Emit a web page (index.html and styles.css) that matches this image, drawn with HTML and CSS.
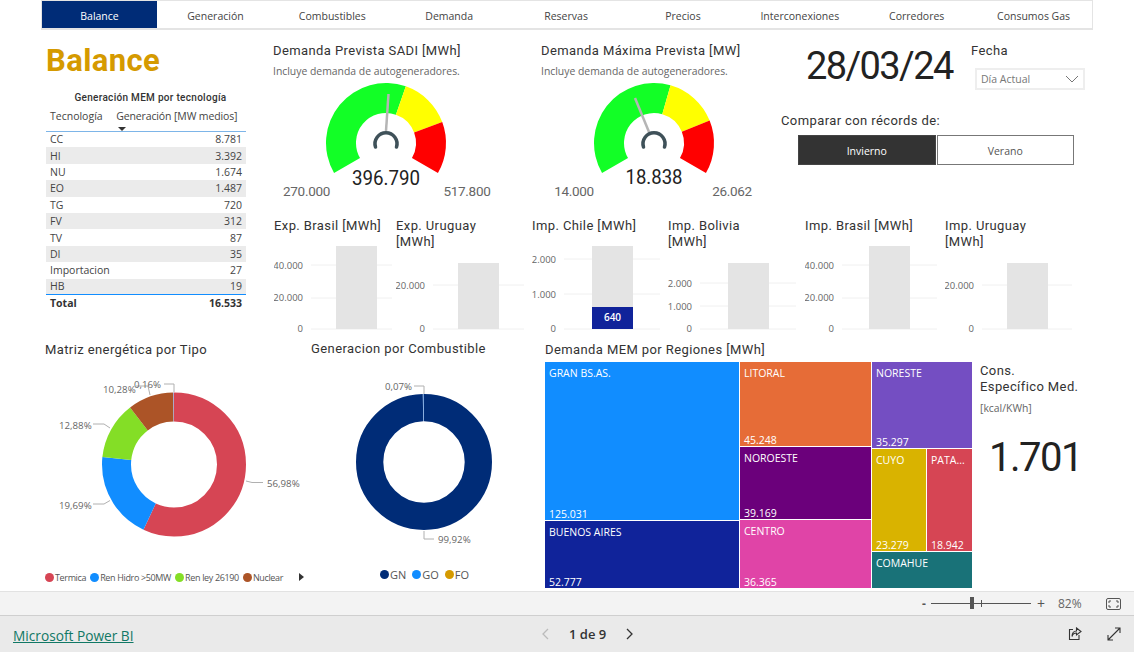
FILE: index.html

```html
<!DOCTYPE html>
<html lang="es">
<head>
  <meta charset="utf-8"/>
  <title>Balance</title>
  <link rel="stylesheet" href="styles.css">
</head>
<body>
<main class="report">
  <!-- tabs -->
  <nav class="tabs">
    <a class="tab active">Balance</a>
    <a class="tab">Generación</a>
    <a class="tab">Combustibles</a>
    <a class="tab">Demanda</a>
    <a class="tab">Reservas</a>
    <a class="tab">Precios</a>
    <a class="tab">Interconexiones</a>
    <a class="tab">Corredores</a>
    <a class="tab">Consumos Gas</a>
  </nav>

  <section class="upper">
    <div class="side">
      <h1 class="page-title">Balance</h1>
      <h2 class="table-title">Generación MEM por tecnología</h2>
      <table class="tech">
        <thead>
          <tr><th>Tecnología</th><th class="sorted">Generación [MW medios]</th></tr>
        </thead>
        <tbody>
          <tr><td>CC</td><td>8.781</td></tr>
          <tr><td>HI</td><td>3.392</td></tr>
          <tr><td>NU</td><td>1.674</td></tr>
          <tr><td>EO</td><td>1.487</td></tr>
          <tr><td>TG</td><td>720</td></tr>
          <tr><td>FV</td><td>312</td></tr>
          <tr><td>TV</td><td>87</td></tr>
          <tr><td>DI</td><td>35</td></tr>
          <tr><td>Importacion</td><td>27</td></tr>
          <tr><td>HB</td><td>19</td></tr>
        </tbody>
        <tfoot>
          <tr><td>Total</td><td>16.533</td></tr>
        </tfoot>
      </table>
    </div>

    <div class="centre">
      <div class="top-row">
        <div class="gauge">
          <h3 class="din-title">Demanda Prevista SADI [MWh]</h3>
          <p class="note">Incluye demanda de autogeneradores.</p>
          <svg class="dial" width="230" height="128" viewBox="-113 -65 230 128">
            <path fill="#12ff26" d="M-51.96 30A60 60 0 0 1 19.83 -56.63L9.92 -28.31A30 30 0 0 0 -25.98 15Z"/>
            <path fill="#ffff00" d="M19.83 -56.63A60 60 0 0 1 56.24 -20.91L28.12 -10.46A30 30 0 0 0 9.92 -28.31Z"/>
            <path fill="#ff0000" d="M56.24 -20.91A60 60 0 0 1 51.96 30L25.98 15A30 30 0 0 0 28.12 -10.46Z"/>
            <line class="needle" x1="2.5" y1="-49" x2="0" y2="-12"/>
            <path class="hub" d="M-10.5 4A11 11 0 1 1 10.5 4"/>
            <text class="dial-value" x="0" y="42" textLength="68" lengthAdjust="spacingAndGlyphs">396.790</text>
            <text class="dial-limit" x="-79.5" y="53">270.000</text>
            <text class="dial-limit" x="81" y="53">517.800</text>
          </svg>
        </div>
        <div class="gauge">
          <h3 class="din-title">Demanda Máxima Prevista [MW]</h3>
          <p class="note">Incluye demanda de autogeneradores.</p>
          <svg class="dial" width="230" height="128" viewBox="-113 -65 230 128">
            <path fill="#12ff26" d="M-51.96 30A60 60 0 0 1 16.54 -57.68L8.27 -28.84A30 30 0 0 0 -25.98 15Z"/>
            <path fill="#ffff00" d="M16.54 -57.68A60 60 0 0 1 55.63 -22.48L27.82 -11.24A30 30 0 0 0 8.27 -28.84Z"/>
            <path fill="#ff0000" d="M55.63 -22.48A60 60 0 0 1 51.96 30L25.98 15A30 30 0 0 0 27.82 -11.24Z"/>
            <line class="needle" x1="-19" y1="-45" x2="-5" y2="-11"/>
            <path class="hub" d="M-10.5 4A11 11 0 1 1 10.5 4"/>
            <text class="dial-value" x="0" y="41" textLength="57" lengthAdjust="spacingAndGlyphs">18.838</text>
            <text class="dial-limit" x="-80" y="53">14.000</text>
            <text class="dial-limit" x="78" y="53">26.062</text>
          </svg>
        </div>
        <div class="date-box">
          <div class="date-line">
            <div class="date">28/03/24</div>
            <div class="filter">
              <h3 class="din-title">Fecha</h3>
              <div class="select">
                <span>Día Actual</span>
                <svg width="14" height="8" viewBox="0 0 14 8"><path d="M1 1l6 6 6-6" fill="none" stroke="#777" stroke-width="1"/></svg>
              </div>
            </div>
          </div>
          <h3 class="din-title compare">Comparar con récords de:</h3>
          <div class="toggle">
            <button class="on">Invierno</button>
            <button>Verano</button>
          </div>
        </div>
      </div>

      <div class="minis">
        <div class="mini">
          <h3 class="din-title">Exp. Brasil [MWh]</h3>
          <svg width="122" height="89">
            <line class="grid" x1="37" x2="118" y1="19" y2="19"/>
            <line class="grid" x1="37" x2="118" y1="52" y2="52"/>
            <line class="grid" x1="37" x2="118" y1="83" y2="83"/>
            <rect class="bar" x="62" y="0" width="41" height="83"/>
            <text class="tick" x="29" y="23">40.000</text>
            <text class="tick" x="29" y="55">20.000</text>
            <text class="tick" x="29" y="86">0</text>
          </svg>
        </div>
        <div class="mini">
          <h3 class="din-title">Exp. Uruguay<br>[MWh]</h3>
          <svg width="136" height="89">
            <line class="grid" x1="37" x2="128" y1="39" y2="39"/>
            <line class="grid" x1="37" x2="128" y1="83" y2="83"/>
            <rect class="bar" x="62" y="17" width="41" height="66"/>
            <text class="tick" x="29" y="43">20.000</text>
            <text class="tick" x="29" y="86">0</text>
          </svg>
        </div>
        <div class="mini">
          <h3 class="din-title">Imp. Chile [MWh]</h3>
          <svg width="136" height="89">
            <line class="grid" x1="32" x2="128" y1="13" y2="13"/>
            <line class="grid" x1="32" x2="128" y1="48" y2="48"/>
            <line class="grid" x1="32" x2="128" y1="83" y2="83"/>
            <rect class="bar" x="60" y="0" width="41" height="83"/>
            <rect class="bar-value" x="60" y="61" width="41" height="22"/>
            <text class="bar-label" x="80.5" y="75">640</text>
            <text class="tick" x="24" y="17">2.000</text>
            <text class="tick" x="24" y="52">1.000</text>
            <text class="tick" x="24" y="86">0</text>
          </svg>
        </div>
        <div class="mini">
          <h3 class="din-title">Imp. Bolivia<br>[MWh]</h3>
          <svg width="137" height="89">
            <line class="grid" x1="32" x2="128" y1="37" y2="37"/>
            <line class="grid" x1="32" x2="128" y1="60" y2="60"/>
            <line class="grid" x1="32" x2="128" y1="83" y2="83"/>
            <rect class="bar" x="60" y="17" width="41" height="66"/>
            <text class="tick" x="24" y="41">2.000</text>
            <text class="tick" x="24" y="64">1.000</text>
            <text class="tick" x="24" y="86">0</text>
          </svg>
        </div>
        <div class="mini">
          <h3 class="din-title">Imp. Brasil [MWh]</h3>
          <svg width="140" height="89">
            <line class="grid" x1="37" x2="132" y1="19" y2="19"/>
            <line class="grid" x1="37" x2="132" y1="52" y2="52"/>
            <line class="grid" x1="37" x2="132" y1="83" y2="83"/>
            <rect class="bar" x="64" y="0" width="41" height="83"/>
            <text class="tick" x="29" y="23">40.000</text>
            <text class="tick" x="29" y="55">20.000</text>
            <text class="tick" x="29" y="86">0</text>
          </svg>
        </div>
        <div class="mini">
          <h3 class="din-title">Imp. Uruguay<br>[MWh]</h3>
          <svg width="130" height="89">
            <line class="grid" x1="37" x2="127" y1="39" y2="39"/>
            <line class="grid" x1="37" x2="127" y1="83" y2="83"/>
            <rect class="bar" x="62" y="17" width="41" height="66"/>
            <text class="tick" x="29" y="43">20.000</text>
            <text class="tick" x="29" y="86">0</text>
          </svg>
        </div>
      </div>
    </div>
  </section>

  <section class="lower">
    <div class="donut-one">
      <h3 class="din-title">Matriz energética por Tipo</h3>
      <svg width="266" height="208" viewBox="45 360 266 208">
        <g transform="rotate(-90 174 464.5)" fill="none" stroke-width="29">
          <circle cx="174" cy="464.5" r="57.5" pathLength="100" stroke="#d64554" stroke-dasharray="56.98 100"/>
          <circle cx="174" cy="464.5" r="57.5" pathLength="100" stroke="#118dff" stroke-dasharray="19.69 100" stroke-dashoffset="-56.98"/>
          <circle cx="174" cy="464.5" r="57.5" pathLength="100" stroke="#84de26" stroke-dasharray="12.88 100" stroke-dashoffset="-76.67"/>
          <circle cx="174" cy="464.5" r="57.5" pathLength="100" stroke="#ac5427" stroke-dasharray="10.28 100" stroke-dashoffset="-89.55"/>
          <circle cx="174" cy="464.5" r="57.5" pathLength="100" stroke="#8a9fd8" stroke-dasharray="0.17 100" stroke-dashoffset="-99.83"/>
        </g>
        <path class="leader" d="M246 481l6 1.500h11"/>
        <path class="leader" d="M93 504h11l6-3.500"/>
        <path class="leader" d="M93 424h11l6 4"/>
        <path class="leader" d="M136 386h12l2 9"/>
        <path class="leader" d="M164 384h10v8"/>
        <text class="pct" x="267" y="487">56,98%</text>
        <text class="pct" x="59" y="509">19,69%</text>
        <text class="pct" x="59" y="429">12,88%</text>
        <text class="pct" x="103" y="393">10,28%</text>
        <text class="pct" x="134" y="388">0,16%</text>
      </svg>
      <div class="legend small">
        <span class="key"><i class="dot red"></i>Termica</span>
        <span class="key"><i class="dot blue"></i>Ren Hidro &gt;50MW</span>
        <span class="key"><i class="dot green"></i>Ren ley 26190</span>
        <span class="key"><i class="dot brown"></i>Nuclear</span>
        <i class="more"></i>
      </div>
    </div>

    <div class="donut-two">
      <h3 class="din-title">Generacion por Combustible</h3>
      <svg width="234" height="208" viewBox="311 360 234 208">
        <g transform="rotate(-90 424 462)" fill="none" stroke-width="27.300">
          <circle cx="424" cy="462" r="54.350" pathLength="100" stroke="#002c77" stroke-dasharray="99.7 100"/>
          <circle cx="424" cy="462" r="54.350" pathLength="100" stroke="#4d86d0" stroke-dasharray="0.2 100" stroke-dashoffset="-99.8"/>
        </g>
        <path class="leader" d="M414 386h10v8"/>
        <path class="leader" d="M424 531v8h10"/>
        <text class="pct" x="385" y="390">0,07%</text>
        <text class="pct" x="438" y="543">99,92%</text>
      </svg>
      <div class="legend large">
        <span class="key"><i class="dot navy"></i>GN</span>
        <span class="key"><i class="dot blue"></i>GO</span>
        <span class="key"><i class="dot gold"></i>FO</span>
      </div>
    </div>

    <div class="regions">
      <h3 class="din-title">Demanda MEM por Regiones [MWh]</h3>
      <div class="treemap">
        <div class="tree-col first">
          <div class="cell gran"><span>GRAN BS.AS.</span><span>125.031</span></div>
          <div class="cell bsas"><span>BUENOS AIRES</span><span>52.777</span></div>
        </div>
        <div class="tree-col second">
          <div class="cell litoral"><span>LITORAL</span><span>45.248</span></div>
          <div class="cell noroeste"><span>NOROESTE</span><span>39.169</span></div>
          <div class="cell centro"><span>CENTRO</span><span>36.365</span></div>
        </div>
        <div class="tree-col third">
          <div class="cell noreste"><span>NORESTE</span><span>35.297</span></div>
          <div class="tree-pair">
            <div class="cell cuyo"><span>CUYO</span><span>23.279</span></div>
            <div class="cell pata"><span>PATA...</span><span>18.942</span></div>
          </div>
          <div class="cell comahue"><span>COMAHUE</span></div>
        </div>
      </div>
    </div>

    <div class="kpi">
      <h3 class="din-title">Cons.<br>Específico Med.</h3>
      <p class="note">[kcal/KWh]</p>
      <div class="kpi-value">1.701</div>
    </div>
  </section>
</main>

<div class="zoombar">
  <span class="zoom-sign">-</span>
  <div class="slider"><i class="thumb"></i><i class="mark"></i></div>
  <span class="zoom-sign plus">+</span>
  <span class="zoom-pct">82%</span>
  <svg class="fit" width="15" height="12" viewBox="0 0 15 12" fill="none" stroke="#555">
    <rect x="0.500" y="0.500" width="14" height="11" rx="1.500"/>
    <path d="M5 3H3v2M10 3h2v2M5 9H3V7M10 9h2V7"/>
  </svg>
</div>

<footer class="footer">
  <a class="brand">Microsoft Power BI</a>
  <div class="pager">
    <svg width="8" height="12" viewBox="0 0 8 12"><path d="M7 1L2 6l5 5" fill="none" stroke="#bbb" stroke-width="1.300"/></svg>
    <span>1 de 9</span>
    <svg width="8" height="12" viewBox="0 0 8 12"><path d="M1 1l5 5-5 5" fill="none" stroke="#333" stroke-width="1.300"/></svg>
  </div>
  <div class="actions">
    <svg width="14" height="14" viewBox="0 0 14 14" fill="none" stroke="#333" stroke-width="1.100">
      <path d="M5 2.500H1.500v10h9.500V8"/>
      <path d="M8.500 1l4.500 3.500L8.500 8V6C6 6 4.500 7.500 4 9.500c0-3.500 2-5.500 4.500-5.500Z"/>
    </svg>
    <svg width="14" height="14" viewBox="0 0 14 14" fill="none" stroke="#333" stroke-width="1.100">
      <path d="M1 13L13 1M8 1h5v5M1 8v5h5"/>
    </svg>
  </div>
</footer>
</body>
</html>
```

FILE: styles.css

```css
/* page */
* { box-sizing: border-box; }

body {
  margin: 0;
  width: 1134px;
  height: 652px;
  overflow: hidden;
  background: #fff;
  color: #333;
  font-family: "Open Sans", "Noto Sans", sans-serif;
}

h1, h2, h3, p { margin: 0; font-weight: normal; }

svg { display: block; }

.report { height: 591px; }

/* tabs */
.tabs {
  display: flex;
  height: 30px;
  margin-left: 41px;
  width: 1052px;
  border: 1px solid #e4e4e4;
  border-width: 1px 1px 2px 1px;
}

.tab {
  flex: 1;
  padding-top: 3px;
  font-size: 10.500px;
  line-height: 24px;
  text-align: center;
  color: #444;
}

.tab.active { flex: none; width: 115px; background: #002c77; color: #fff; }

/* shared titles */
.din-title {
  font-family: Roboto, sans-serif;
  font-size: 13px;
  line-height: 15.500px;
  letter-spacing: 0.4px;
  color: #333;
}

.note {
  font-size: 10.400px;
  line-height: 14px;
  color: #666;
}

/* upper part */
.upper { display: flex; height: 305px; }

.side { width: 273px; padding-left: 46px; }

.page-title {
  font-family: Roboto, sans-serif;
  font-weight: 700;
  font-size: 31px;
  line-height: 36px;
  height: 38px;
  margin-top: 13px;
  color: #d59a00;
  letter-spacing: 0.4px;
}

.table-title {
  margin-top: 10px;
  width: 209px;
  text-align: center;
  font-family: Roboto, sans-serif;
  font-weight: 500;
  font-size: 10px;
  line-height: 14px;
  letter-spacing: 0.3px;
  color: #333;
}

.tech {
  width: 200px;
  border-collapse: collapse;
  font-size: 10.500px;
  color: #444;
}

.tech th {
  height: 26px;
  font-weight: normal;
  text-align: left;
  padding: 0 4px 4px;
  white-space: nowrap;
  border-bottom: 1px solid #7db5e8;
}

.tech th.sorted { position: relative; padding-left: 0; letter-spacing: -0.12px; }

.tech th.sorted::after {
  content: "";
  position: absolute;
  left: 2px;
  bottom: 0;
  border: 4px solid transparent;
  border-top: 4px solid #333;
  border-bottom: 0;
}

.tech td { height: 16.400px; padding: 0 4px; line-height: 14px; }
.tech td:last-child { text-align: right; }
.tech tbody tr:nth-child(even) td { background: #ebebeb; }
.tech tbody tr:last-child td { border-bottom: 1px solid #118dff; }
.tech tfoot td { font-weight: 700; color: #333; }

.centre { flex: 1; }

.top-row { display: flex; height: 188px; }

.gauge { width: 268px; padding-top: 13px; }
.gauge + .gauge { width: 240px; }
.gauge .note { margin-top: 5px; }

.needle { stroke: #b5b5b5; stroke-width: 2.500; }
.hub { fill: none; stroke: #3f5159; stroke-width: 3.500; stroke-linecap: round; }

.dial-value {
  font-family: Roboto, sans-serif;
  font-size: 20px;
  text-anchor: middle;
  fill: #222;
}

.dial-limit {
  font-family: Roboto, sans-serif;
  font-size: 13.500px;
  letter-spacing: -0.3px;
  text-anchor: middle;
  fill: #666;
}

/* date and records */
.date-box { width: 320px; padding-top: 13px; }

.date-line { display: flex; height: 60px; }

.date {
  width: 190px;
  margin-top: -1px;
  padding-left: 25px;
  font-family: Roboto, sans-serif;
  font-size: 38px;
  line-height: 48px;
  letter-spacing: -1.600px;
  color: #222;
}

.select {
  display: flex;
  align-items: center;
  justify-content: space-between;
  width: 110px;
  height: 22px;
  margin: 9px 0 0 4px;
  padding: 1px 4px 0 4px;
  border: 2px solid #eee;
  font-size: 10.500px;
  color: #777;
}

.compare { margin-top: 10px; }

.toggle { display: flex; gap: 1px; margin: 6px 0 0 17px; }

.toggle button {
  width: 137.500px;
  height: 30px;
  background: #fff;
  border: 1px solid #777;
  font: 10.500px "Open Sans", sans-serif;
  color: #555;
  padding: 2px 0 0;
}

.toggle button.on { background: #333; color: #fff; border-color: #444; }

/* small bar charts */
.minis {
  display: grid;
  grid-template-columns: 122px 136px 136px 137px 140px 130px;
  padding-left: 1px;
}

.mini .din-title { height: 28px; }

.grid { stroke: #f0f0f0; stroke-width: 1; }
.bar { fill: #e4e4e4; }
.bar-value { fill: #10239a; }

.tick {
  font-family: "Open Sans", sans-serif;
  font-size: 9.500px;
  text-anchor: end;
  fill: #666;
}

.bar-label {
  font-family: "Open Sans", sans-serif;
  font-size: 10px;
  font-weight: 600;
  text-anchor: middle;
  fill: #fff;
}

/* lower part */
.lower { display: flex; height: 256px; }

.donut-one { width: 266px; margin-left: 45px; padding-top: 7px; }
.donut-two { width: 234px; padding-top: 6px; }
.donut-one svg { margin-top: 2px; }
.donut-two svg { margin-top: 3px; }

.leader { fill: none; stroke: #b0b0b0; stroke-width: 1; }

.pct {
  font-family: "Open Sans", sans-serif;
  font-size: 9.700px;
  fill: #666;
}

.legend { display: flex; color: #555; white-space: nowrap; }
.legend.small { gap: 4px; font-size: 9px; letter-spacing: -0.35px; align-items: center; margin-top: 3px; }
.legend.large { gap: 6px; font-size: 11px; justify-content: center; padding-right: 7px; margin-top: -1px; }

.key { display: flex; align-items: center; gap: 1px; }

.dot { width: 9px; height: 9px; border-radius: 50%; }
.dot.red { background: #d64554; }
.dot.blue { background: #118dff; }
.dot.green { background: #84de26; }
.dot.brown { background: #ac5427; }
.dot.navy { background: #002c77; }
.dot.gold { background: #d59a00; }

.more {
  margin-left: 12px;
  border-left: 5px solid #333;
  border-top: 4px solid transparent;
  border-bottom: 4px solid transparent;
}

/* treemap */
.regions { width: 427px; padding-top: 7px; }

.treemap { display: flex; gap: 1px; height: 226px; margin-top: 4px; }

.tree-col { display: flex; flex-direction: column; gap: 1px; }
.tree-col.first { width: 194px; }
.tree-col.second { width: 131px; }
.tree-col.third { width: 100px; }

.tree-pair { display: flex; gap: 1px; height: 102px; }

.cell {
  display: flex;
  flex-direction: column;
  justify-content: space-between;
  padding: 5px 4px 0;
  color: #fff;
  font-size: 10.500px;
  line-height: 12px;
}

.gran { height: 158px; background: #118dff; }
.bsas { flex: 1; background: #10239a; }
.litoral { height: 84px; background: #e66c37; }
.noroeste { height: 72px; background: #6b007b; }
.centro { flex: 1; background: #e044a7; }
.noreste { height: 86px; background: #744ec2; }
.cuyo { width: 54px; background: #d9b300; }
.pata { flex: 1; background: #d64554; }
.comahue { flex: 1; background: #197278; }

/* consumption number */
.kpi { width: 110px; margin-left: 8px; padding-top: 28px; }
.kpi .note { margin-top: 7px; }

.kpi-value {
  margin-top: 19px;
  padding-left: 9px;
  font-family: Roboto, sans-serif;
  font-size: 40px;
  line-height: 48px;
  letter-spacing: -1.500px;
  color: #222;
}

/* zoom bar */
.zoombar {
  display: flex;
  align-items: center;
  height: 24px;
  padding-left: 922px;
  background: #f3f3f3;
  border-top: 1px solid #e2e2e2;
  font-size: 12px;
  color: #555;
}

.zoom-sign { width: 9px; font-weight: 700; }
.zoom-sign.plus { margin-left: 6px; width: 12px; font-weight: 400; font-size: 14px; }
.zoom-pct { margin-left: 9px; color: #666; }
.fit { margin-left: 24px; }

.slider { position: relative; width: 100px; height: 1px; background: #555; }

.thumb {
  position: absolute;
  left: 39px;
  top: -6px;
  width: 4px;
  height: 12px;
  background: #555;
}

.mark {
  position: absolute;
  left: 50px;
  top: -3px;
  width: 1px;
  height: 7px;
  background: #555;
}

/* footer */
.footer {
  display: flex;
  align-items: center;
  height: 37px;
  padding-left: 13px;
  background: #eaeaea;
  border-top: 1px solid #cfcfcf;
}

.brand {
  width: 528px;
  padding-top: 2px;
  font-size: 13.700px;
  color: #117865;
  text-decoration: underline;
}

.pager {
  display: flex;
  align-items: center;
  gap: 20px;
  width: 527px;
  font-size: 13px;
  font-weight: 600;
  color: #333;
}

.actions { display: flex; gap: 25px; }
```
